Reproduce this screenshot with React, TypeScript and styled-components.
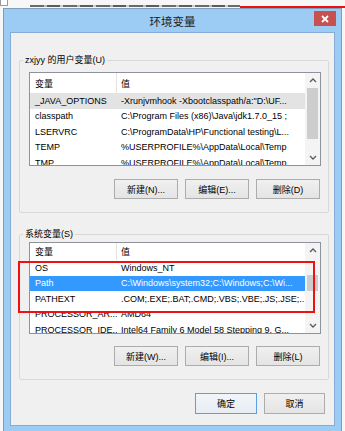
import React from "react";
import styled, { createGlobalStyle } from "styled-components";

interface EnvVar {
  name: string;
  value: string;
}

const userVars: EnvVar[] = [
  { name: "_JAVA_OPTIONS", value: '-Xrunjvmhook -Xbootclasspath/a:"D:\\UF...' },
  { name: "classpath", value: "C:\\Program Files (x86)\\Java\\jdk1.7.0_15 ;" },
  { name: "LSERVRC", value: "C:\\ProgramData\\HP\\Functional testing\\L..." },
  { name: "TEMP", value: "%USERPROFILE%\\AppData\\Local\\Temp" },
  { name: "TMP", value: "%USERPROFILE%\\AppData\\Local\\Temp" },
];

const systemVars: EnvVar[] = [
  { name: "OS", value: "Windows_NT" },
  { name: "Path", value: "C:\\Windows\\system32;C:\\Windows;C:\\Wi..." },
  { name: "PATHEXT", value: ".COM;.EXE;.BAT;.CMD;.VBS;.VBE;.JS;.JSE;..." },
  { name: "PROCESSOR_AR...", value: "AMD64" },
  { name: "PROCESSOR_IDE...", value: "Intel64 Family 6 Model 58 Stepping 9, G..." },
];

const GlobalStyle = createGlobalStyle`
  html, body {
    margin: 0;
    padding: 0;
    background: #f7f7f7;
  }
  body {
    width: 345px;
    height: 431px;
    overflow: hidden;
    font-family: "Liberation Sans", "Noto Sans CJK SC", sans-serif;
    font-size: 9px;
    color: #000;
  }
`;

const Page = styled.div`
  display: flex;
  flex-direction: column;
  width: 345px;
  height: 431px;
`;

const TopStrip = styled.div`
  display: flex;
  align-items: flex-start;
  height: 8px;
  flex-shrink: 0;
  background: #f7f7f7;
`;

const StripIcon = styled.div`
  width: 6px;
  height: 5px;
  border: 1px solid #9a9a9a;
  border-top: none;
  background: #fff;
`;

const DarkLine = styled.div`
  width: 210px;
  height: 1.5px;
  margin: 5px 0 0 22px;
  background: repeating-linear-gradient(
    90deg,
    #6a6a6a 0 14px,
    #b8b8b8 14px 17px,
    #5c5c5c 17px 30px,
    #cfcfcf 30px 33px
  );
`;

const RedLine = styled.div`
  flex: 1;
  height: 2px;
  margin-top: 6px;
  background: #ee1111;
`;

const Window = styled.div`
  width: 339px;
  margin-left: 3px;
  box-sizing: border-box;
  flex-shrink: 0;
  border: 1px solid #7c9dbd;
  background: #9ccbf4;
  padding: 0 6px 5px 6px;
`;

const TitleBar = styled.div`
  display: grid;
  grid-template-columns: 1fr auto 1fr;
  align-items: center;
  height: 23px;
`;

const Title = styled.div`
  grid-column: 2;
  font-size: 11.5px;
  line-height: 14px;
  color: #222;
  font-family: "Noto Sans CJK SC", sans-serif;
`;

const CloseButton = styled.div`
  grid-column: 3;
  justify-self: end;
  align-self: start;
  margin-top: 2px;
  margin-right: -1px;
  width: 22px;
  height: 15px;
  background: #c75050;
  display: flex;
  align-items: center;
  justify-content: center;
`;

const Client = styled.div`
  display: flex;
  flex-direction: column;
  background: #f0f0f0;
  border: 1px solid #86acd6;
  padding: 21px 0 11px 0;
`;

const Group = styled.fieldset<{ $top: number; $padTop: number }>`
  margin: ${({ $top }) => $top}px 5px 0 8px;
  padding: ${({ $padTop }) => $padTop}px 7px 13px 9px;
  border: 1px solid #d8d8d8;
  border-radius: 2px;
  min-width: 0;
`;

const Legend = styled.legend`
  height: 12px;
  padding: 0 2px;
  margin-left: -6px;
  line-height: 12px;
  font-size: 9px;
  overflow: visible;
`;

const ListView = styled.div<{ $height: number }>`
  display: grid;
  grid-template-columns: 1fr 15px;
  height: ${({ $height }) => $height}px;
  border: 1px solid #8e9299;
  background: #fff;
  overflow: hidden;
`;

const ListBody = styled.div`
  overflow: hidden;
`;

const HeaderRow = styled.div<{ $height: number }>`
  display: grid;
  grid-template-columns: 87px 1fr;
  height: ${({ $height }) => $height}px;
`;

const HeaderCell = styled.div`
  display: flex;
  align-items: center;
  padding-left: 5px;
  border-right: 1px solid #e3e3e3;
  &:last-child {
    border-right: none;
    padding-left: 4px;
  }
`;

const Row = styled.div<{ $state: "none" | "inactive" | "active" }>`
  display: grid;
  grid-template-columns: 87px 1fr;
  height: 15.5px;
  align-items: center;
  white-space: nowrap;
  background: ${({ $state }) =>
    $state === "active" ? "#3399ff" : $state === "inactive" ? "#e3e3e3" : "transparent"};
  color: ${({ $state }) => ($state === "active" ? "#fff" : "#000")};
`;

const Cell = styled.div`
  overflow: hidden;
  padding-left: 5px;
  &:last-child {
    padding-left: 4px;
  }
`;

const ScrollBar = styled.div`
  display: flex;
  flex-direction: column;
  background: #f4f4f4;
`;

const ScrollArrow = styled.div`
  height: 15px;
  display: flex;
  align-items: center;
  justify-content: center;
`;

const ScrollTrack = styled.div`
  flex: 1;
  position: relative;
`;

const Thumb = styled.div`
  position: absolute;
  left: 2px;
  right: 2px;
  background: #cdcdcd;
`;

const ListArea = styled.div`
  position: relative;
`;

const Highlight = styled.div`
  position: absolute;
  left: -11px;
  top: 19px;
  width: 297px;
  height: 52px;
  box-sizing: border-box;
  border: 2.5px solid #ee1111;
  pointer-events: none;
`;

const ButtonRow = styled.div<{ $top: number; $right: number }>`
  display: flex;
  justify-content: flex-end;
  gap: 7px;
  margin-top: ${({ $top }) => $top}px;
  padding-right: ${({ $right }) => $right}px;
`;

const Button = styled.div<{ $width: number; $height: number; $default?: boolean }>`
  width: ${({ $width }) => $width}px;
  height: ${({ $height }) => $height}px;
  box-sizing: border-box;
  display: flex;
  align-items: center;
  justify-content: center;
  border: 1px solid ${({ $default }) => ($default ? "#5b9fe2" : "#acacac")};
  background: ${({ $default }) =>
    $default ? "linear-gradient(#f2f6fb, #e7edf4)" : "linear-gradient(#f0f0f0, #e4e4e4)"};
  font-size: 9px;
`;

const BottomStrip = styled.div`
  display: flex;
  height: 3px;
  border-top: 1px solid #a9a9a9;
  background: #fafafa;
  padding-left: 99px;
  gap: 7px;
`;

const GhostButton = styled.div<{ $width: number }>`
  width: ${({ $width }) => $width}px;
  border: 1px solid #b8b8b8;
  border-top: none;
  border-bottom: none;
`;

const ChevronUp = () => (
  <svg width="8" height="5" viewBox="0 0 8 5">
    <path d="M1 4 L4 1 L7 4" fill="none" stroke="#5a5a5a" strokeWidth="1.3" />
  </svg>
);

const ChevronDown = () => (
  <svg width="8" height="5" viewBox="0 0 8 5">
    <path d="M1 1 L4 4 L7 1" fill="none" stroke="#5a5a5a" strokeWidth="1.3" />
  </svg>
);

interface ListProps {
  vars: EnvVar[];
  height: number;
  headerHeight: number;
  selected: number;
  active: boolean;
  thumbTop: number;
  thumbHeight: number;
}

const VarList = ({ vars, height, headerHeight, selected, active, thumbTop, thumbHeight }: ListProps) => (
  <ListView $height={height}>
    <ListBody>
      <HeaderRow $height={headerHeight}>
        <HeaderCell>变量</HeaderCell>
        <HeaderCell>值</HeaderCell>
      </HeaderRow>
      {vars.map((v, i) => (
        <Row key={v.name} $state={i === selected ? (active ? "active" : "inactive") : "none"}>
          <Cell>{v.name}</Cell>
          <Cell>{v.value}</Cell>
        </Row>
      ))}
    </ListBody>
    <ScrollBar>
      <ScrollArrow>
        <ChevronUp />
      </ScrollArrow>
      <ScrollTrack>
        <Thumb style={{ top: thumbTop, height: thumbHeight }} />
      </ScrollTrack>
      <ScrollArrow>
        <ChevronDown />
      </ScrollArrow>
    </ScrollBar>
  </ListView>
);

const App = () => (
  <Page>
    <GlobalStyle />
    <TopStrip>
      <StripIcon />
      <DarkLine />
      <RedLine />
    </TopStrip>
    <Window>
      <TitleBar>
        <Title>环境变量</Title>
        <CloseButton>
          <svg width="8" height="8" viewBox="0 0 8 8">
            <path d="M1 1 L7 7 M7 1 L1 7" stroke="#fff" strokeWidth="1.8" />
          </svg>
        </CloseButton>
      </TitleBar>
      <Client>
        <Group $top={0} $padTop={6}>
          <Legend>zxjyy 的用户变量(U)</Legend>
          <VarList
            vars={userVars}
            height={92}
            headerHeight={20}
            selected={0}
            active={false}
            thumbTop={0}
            thumbHeight={51}
          />
          <ButtonRow $top={13} $right={1}>
            <Button $width={64} $height={20}>新建(N)...</Button>
            <Button $width={64} $height={20}>编辑(E)...</Button>
            <Button $width={64} $height={20}>删除(D)</Button>
          </ButtonRow>
        </Group>
        <Group $top={15} $padTop={2}>
          <Legend>系统变量(S)</Legend>
          <ListArea>
            <VarList
              vars={systemVars}
              height={90}
              headerHeight={17}
              selected={1}
              active={true}
              thumbTop={17}
              thumbHeight={16}
            />
            <Highlight />
          </ListArea>
          <ButtonRow $top={12} $right={1}>
            <Button $width={64} $height={20}>新建(W)...</Button>
            <Button $width={64} $height={20}>编辑(I)...</Button>
            <Button $width={64} $height={20}>删除(L)</Button>
          </ButtonRow>
        </Group>
        <ButtonRow $top={13} $right={9}>
          <Button $width={62} $height={21} $default>
            确定
          </Button>
          <Button $width={61} $height={21}>
            取消
          </Button>
        </ButtonRow>
      </Client>
    </Window>
    <BottomStrip>
      <GhostButton $width={62} />
      <GhostButton $width={62} />
      <GhostButton $width={62} />
      <GhostButton $width={40} />
    </BottomStrip>
  </Page>
);

export default App;
